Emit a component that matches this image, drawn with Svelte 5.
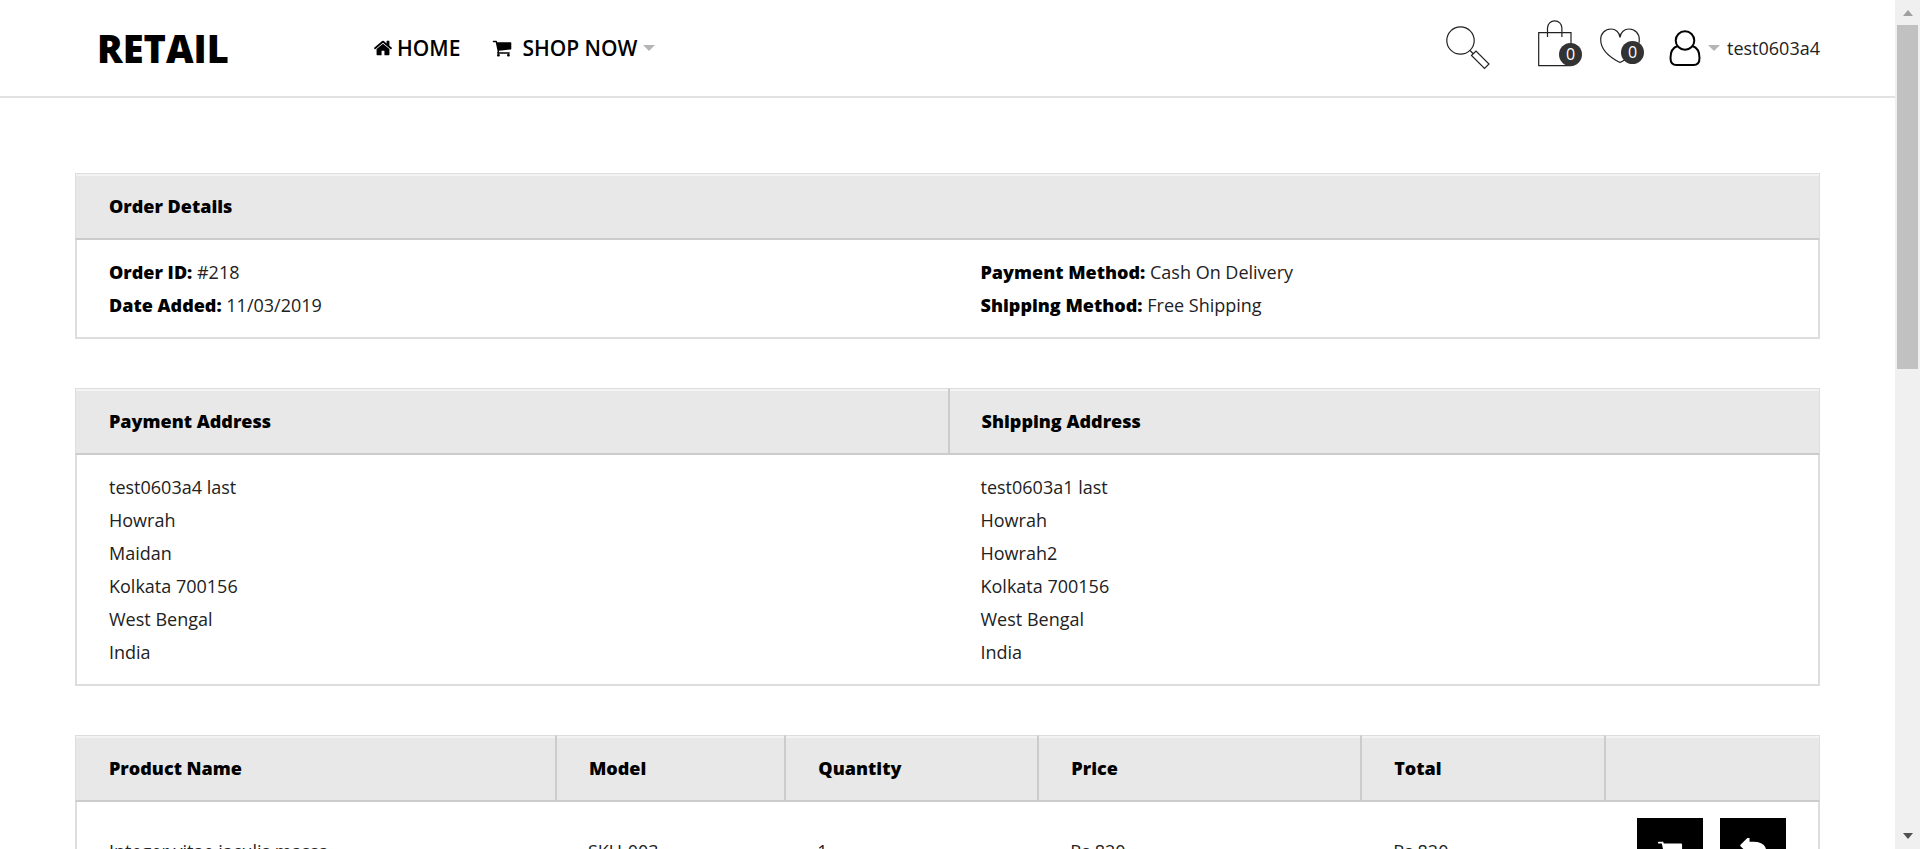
<script>
  const orders = [
    [['Order ID:', '#218'], ['Date Added:', '11/03/2019']],
    [['Payment Method:', 'Cash On Delivery'], ['Shipping Method:', 'Free Shipping']]
  ];
  const addresses = [
    ['test0603a4 last', 'Howrah', 'Maidan', 'Kolkata 700156', 'West Bengal', 'India'],
    ['test0603a1 last', 'Howrah', 'Howrah2', 'Kolkata 700156', 'West Bengal', 'India']
  ];
  const columns = [
    ['Product Name', 27.5], ['Model', 13.15], ['Quantity', 14.5],
    ['Price', 18.5], ['Total', 14], ['', 12.35]
  ];
  const product = ['Integer vitae iaculis massa', 'SKU-003', '1', 'Rs.820', 'Rs.820'];
</script>

{#snippet cart()}
  <svg class="glyph" viewBox="0 0 1792 1792" aria-hidden="true"><path d="M704 1536q0 52-38 90t-90 38-90-38-38-90 38-90 90-38 90 38 38 90zm896 0q0 52-38 90t-90 38-90-38-38-90 38-90 90-38 90 38 38 90zm128-1088v512q0 24-16.500 42.500t-40.500 21.500l-1044 122q13 60 13 70 0 16-24 64h920q26 0 45 19t19 45-19 45-45 19h-1024q-26 0-45-19t-19-45q0-11 8-31.500t16-36 21.500-40 15.500-29.500l-177-823h-204q-26 0-45-19t-19-45 19-45 45-19h256q16 0 28.500 6.500t19.500 15.500 13 24.500 8 26 5.500 29.500 4.500 26h1201q26 0 45 19t19 45z" /></svg>
{/snippet}

<div class="window">
  <div class="page">
    <header>
      <a class="logo" href="#home">RETAIL</a>
      <nav>
        <a href="#home">
          <svg class="glyph" viewBox="0 0 1792 1792" aria-hidden="true"><path d="M1472 992v480q0 26-19 45t-45 19h-384v-384h-256v384h-384q-26 0-45-19t-19-45v-480q0-1 .5-3t.5-3l575-474 575 474q1 2 1 6zm223-69l-62 74q-8 9-21 11h-3q-13 0-21-7l-692-577-692 577q-12 8-24 7-13-2-21-11l-62-74q-8-10-7-23.500t11-21.500l719-599q32-26 76-26t76 26l244 204v-195q0-14 9-23t23-9h192q14 0 23 9t9 23v408l219 182q10 8 11 21.500t-7 23.500z" /></svg>
          HOME
        </a>
        <a class="shop" href="#shop">{@render cart()}<span>SHOP NOW</span><i class="caret"></i></a>
      </nav>
      <div class="tools">
        <button class="search" aria-label="Search">
          <svg width="44" height="44" viewBox="0 0 44 44" fill="none" stroke="#222" stroke-width="1.200"><circle cx="14.500" cy="14.500" r="13.700" /><path d="M24 24.500l3 3M25.500 29.500l4.500-4.500 13 13-4.500 4.500z" /></svg>
        </button>
        <a class="bag" href="#cart" aria-label="Cart">
          <svg width="34" height="47" viewBox="0 0 34 47" fill="none" stroke="#222" stroke-width="1.200"><path d="M.7 12.700h32.300v33H.7zM9.500 17V8a7.200 7.200 0 0 1 14.400 0v9" /></svg>
          <b class="badge">0</b>
        </a>
        <a class="heart" href="#wishlist" aria-label="Wishlist">
          <svg width="40" height="36" viewBox="0 0 40 36" fill="none" stroke="#222" stroke-width="1.200"><path d="M20 9.500C19.500 4 15.500 1 11 1 5 1 .7 5.500.7 11.500.7 21 9 29 20 34.500 31 29 39.300 21 39.300 11.500 39.300 5.500 35 1 29 1c-4.500 0-8.500 3-9 8.500z" /></svg>
          <b class="badge">0</b>
        </a>
        <a class="user" href="#account">
          <svg width="32" height="36" viewBox="0 0 32 36" fill="none" stroke="#000" stroke-width="2"><circle cx="16" cy="10.500" r="9.300" /><path d="M8.500 16C4 17.500 1.500 22 1.500 28c0 4.500 2.500 7 6 7h17c3.500 0 6-2.500 6-7 0-6-2.500-10.500-7-12" /></svg>
          <i class="caret"></i>
          <span>test0603a4</span>
        </a>
      </div>
    </header>

    <main>
      <table>
        <thead><tr><th colspan="2">Order Details</th></tr></thead>
        <tbody>
          <tr>
            {#each orders as group}
              <td>{#each group as [label, value]}<div><strong>{label}</strong> {value}</div>{/each}</td>
            {/each}
          </tr>
        </tbody>
      </table>

      <table>
        <thead><tr><th>Payment Address</th><th>Shipping Address</th></tr></thead>
        <tbody>
          <tr>
            {#each addresses as lines}
              <td>{#each lines as line}<div>{line}</div>{/each}</td>
            {/each}
          </tr>
        </tbody>
      </table>

      <table>
        <colgroup>{#each columns as [, width]}<col style="width: {width}%" />{/each}</colgroup>
        <thead><tr>{#each columns as [name]}<th>{name}</th>{/each}</tr></thead>
        <tbody>
          <tr>
            {#each product as value}<td>{value}</td>{/each}
            <td>
              <div class="actions">
                <button aria-label="Reorder">{@render cart()}</button>
                <button aria-label="Return">
                  <svg class="glyph" viewBox="0 0 1792 1792" aria-hidden="true"><path d="M1792 1056q0 166-127 451-3 7-10.500 24t-13.500 30-13 22q-12 17-28 17-15 0-23.500-10t-8.500-25q0-9 2.500-26.500t2.500-23.500q5-68 5-123 0-112-19.500-200.500t-54-153.500-89-112-114-78-131.500-48-139.500-23-150-6h-224v256q0 26-19 45t-45 19-45-19l-512-512q-19-19-19-45t19-45l512-512q19-19 45-19t45 19 19 45v256h224q713 0 875 403 53 134 53 333z" /></svg>
                </button>
              </div>
            </td>
          </tr>
        </tbody>
      </table>
    </main>
  </div>

  <div class="scrollbar" aria-hidden="true">
    <i class="arrow up"></i>
    <div class="track"><div class="thumb"></div></div>
    <i class="arrow down"></i>
  </div>
</div>

<style>
  :global(body) { margin: 0; background: #fff; }
  * { box-sizing: border-box; }
  .window {
    display: flex;
    height: 100vh;
    overflow: hidden;
    font: 400 18px/33px "Open Sans", sans-serif;
    color: #000;
  }
  .page { flex: 1; min-width: 0; overflow: hidden; }
  a { color: inherit; text-decoration: none; }
  button { padding: 0; border: 0; background: none; font: inherit; cursor: pointer; }
  svg { display: block; flex: none; }
  .glyph { width: 20px; height: 20px; fill: currentColor; }

  header {
    display: flex;
    align-items: center;
    height: 98px;
    padding: 0 75px 0 97px;
    border-bottom: 2px solid #e2e2e2;
  }
  .logo { width: 276px; font-size: 38px; font-weight: 800; }
  nav { display: flex; gap: 32px; font-size: 21px; font-weight: 600; }
  nav a { display: flex; align-items: center; gap: 4px; }
  nav .shop { gap: 6px; }
  .shop .glyph { margin-right: 4px; }
  .caret {
    border: 6px solid transparent;
    border-top-color: #b5b5b5;
    border-bottom: 0;
  }
  .tools { display: flex; align-items: center; margin-left: auto; }
  .bag, .heart { position: relative; }
  .search { margin-right: 48px; }
  .bag { margin: 0 28px 10px 0; }
  .heart { margin: 0 29px 4px 0; }
  .badge {
    position: absolute;
    right: -10px;
    bottom: 1px;
    width: 23px;
    height: 23px;
    border-radius: 50%;
    background: #333;
    color: #fff;
    font-size: 16px;
    font-weight: 500;
    line-height: 23px;
    text-align: center;
  }
  .heart .badge { right: -4px; bottom: 0; }
  .user { display: flex; align-items: center; gap: 7px; }
  .user span { color: #222; }

  main { display: grid; gap: 49px; padding: 75px 75px 0; }
  table {
    width: 100%;
    table-layout: fixed;
    border-collapse: separate;
    border-spacing: 0;
    text-align: left;
  }
  th {
    height: 67px;
    padding: 0 32px;
    border-top: 1px solid #ddd;
    border-bottom: 2px solid #ccc;
    border-left: 2px solid #ccc;
    background: #e8e8e8;
    box-shadow: inset 0 2px #f3f3f3;
    font-weight: 800;
  }
  th:first-child { padding-left: 33px; border-left: 1px solid #ddd; }
  th:last-child { border-right: 1px solid #ddd; }
  td { padding: 16px 32px 15px; border-bottom: 2px solid #ddd; color: #222; }
  td:first-child { border-left: 2px solid #ddd; }
  td:last-child { border-right: 2px solid #ddd; }
  td + td { padding-left: 33px; }
  strong { font-weight: 800; color: #000; }
  .actions { display: flex; gap: 17px; }
  .actions button {
    display: grid;
    place-items: center;
    width: 66px;
    height: 66px;
    background: #000;
    color: #fff;
  }
  .actions .glyph { width: 26px; height: 26px; }

  .scrollbar {
    display: flex;
    flex-direction: column;
    align-items: center;
    width: 25px;
    background: #f0f0f0;
  }
  .arrow { border: 5px solid transparent; }
  .up { margin: 5px 0 9px; border-bottom: 6px solid #a0a0a0; }
  .down { margin: 8px 0 5px; border-top: 6px solid #505050; }
  .track { flex: 1; align-self: stretch; padding: 0 2px; }
  .thumb { height: 43%; background: #c1c1c1; }
</style>
